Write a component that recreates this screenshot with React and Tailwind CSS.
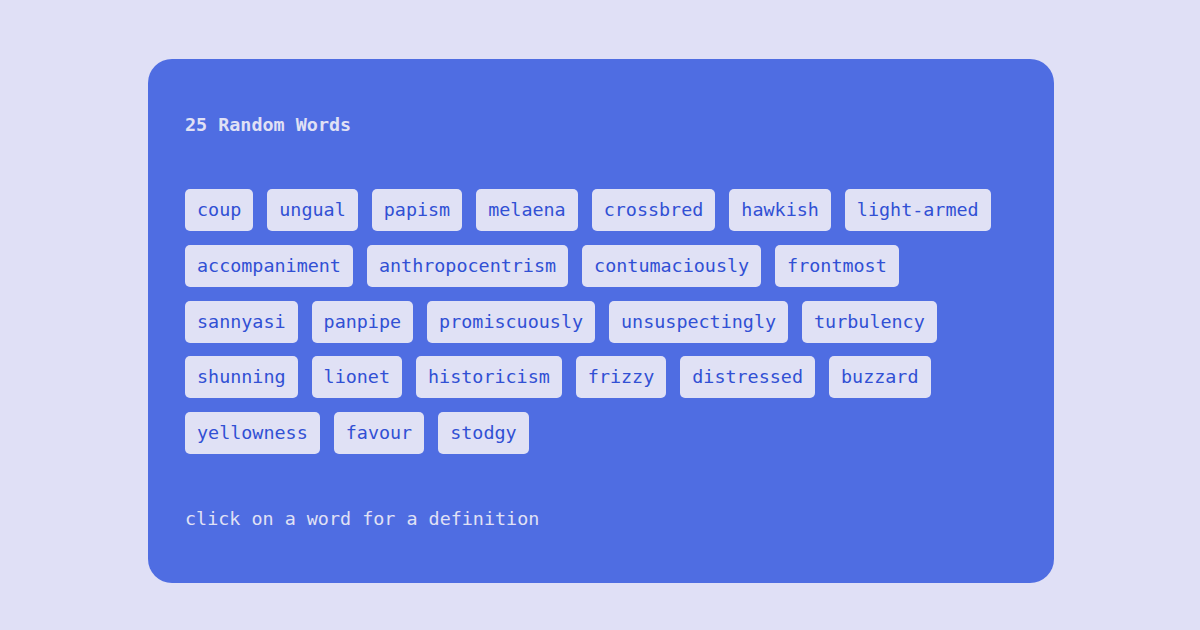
const WORDS = [
  'coup', 'ungual', 'papism', 'melaena', 'crossbred', 'hawkish', 'light-armed',
  'accompaniment', 'anthropocentrism', 'contumaciously', 'frontmost',
  'sannyasi', 'panpipe', 'promiscuously', 'unsuspectingly', 'turbulency',
  'shunning', 'lionet', 'historicism', 'frizzy', 'distressed', 'buzzard',
  'yellowness', 'favour', 'stodgy',
]

export default function App() {
  return (
    <div className="min-h-screen w-full bg-[#e0e0f6] flex items-center justify-center font-['DejaVu_Sans_Mono',monospace]">
      <div className="w-[906px] ml-[2px] mt-[12px] rounded-[24px] bg-[#4f6de2] px-[37px] pt-[52px] pb-[51px]">
        <h1 className="text-[18.4px] leading-[27px] font-bold text-[#e0e1f5]">
          {WORDS.length} Random Words
        </h1>

        {/* word chips */}
        <div className="mt-[51px] flex flex-wrap gap-x-[14px] gap-y-[13.75px]">
          {WORDS.map((w) => (
            <button
              key={w}
              className="rounded-[5px] bg-[#e0e1f5] px-[12px] py-[10px] text-[18.4px] leading-[22px] text-[#3150d4]"
            >
              {w}
            </button>
          ))}
        </div>

        <p className="mt-[51px] text-[18.4px] leading-[27px] text-[#e0e1f5]">
          click on a word for a definition
        </p>
      </div>
    </div>
  )
}
